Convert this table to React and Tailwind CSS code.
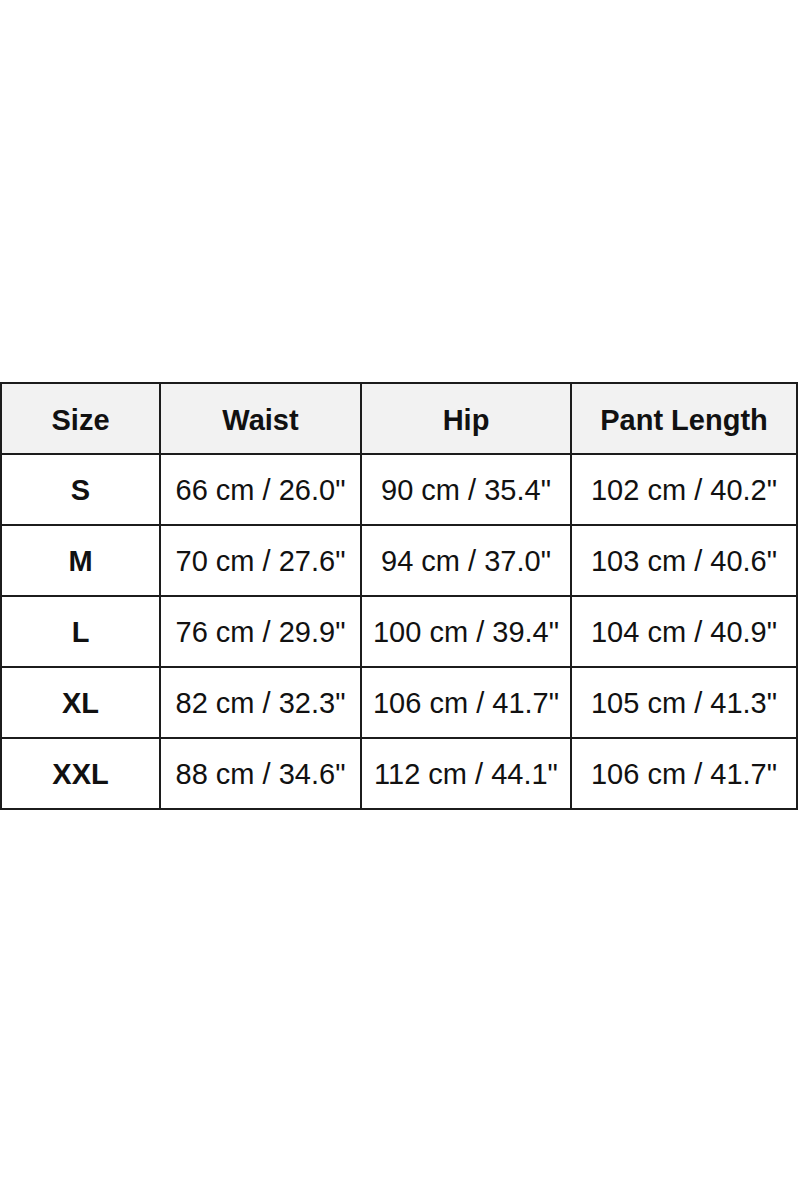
export default function App() {
  const headers = ["Size", "Waist", "Hip", "Pant Length"];
  const rows = [
    ["S", '66 cm / 26.0"', '90 cm / 35.4"', '102 cm / 40.2"'],
    ["M", '70 cm / 27.6"', '94 cm / 37.0"', '103 cm / 40.6"'],
    ["L", '76 cm / 29.9"', '100 cm / 39.4"', '104 cm / 40.9"'],
    ["XL", '82 cm / 32.3"', '106 cm / 41.7"', '105 cm / 41.3"'],
    ["XXL", '88 cm / 34.6"', '112 cm / 44.1"', '106 cm / 41.7"'],
  ];
  return (
    <div className="w-[800px] h-[1200px] bg-white pt-[382px]" style={{ fontFamily: '"Liberation Sans", Arial, sans-serif' }}>
      <div className="grid grid-cols-[157px_199px_208px_224px] auto-rows-[69px] gap-[2px] p-[2px] bg-[#1c1c1c] w-[798px] text-[#111] text-[29px]">
        {headers.map((h) => (
          <div key={h} className="bg-[#f2f2f2] flex items-center justify-center font-bold pt-[5px]">
            {h}
          </div>
        ))}
        {rows.map((r) =>
          r.map((c, i) => (
            <div key={r[0] + i} className={"bg-white flex items-center justify-center whitespace-nowrap pt-[3px] " + (i === 0 ? "font-bold" : "")}>
              {c}
            </div>
          ))
        )}
      </div>
    </div>
  );
}
